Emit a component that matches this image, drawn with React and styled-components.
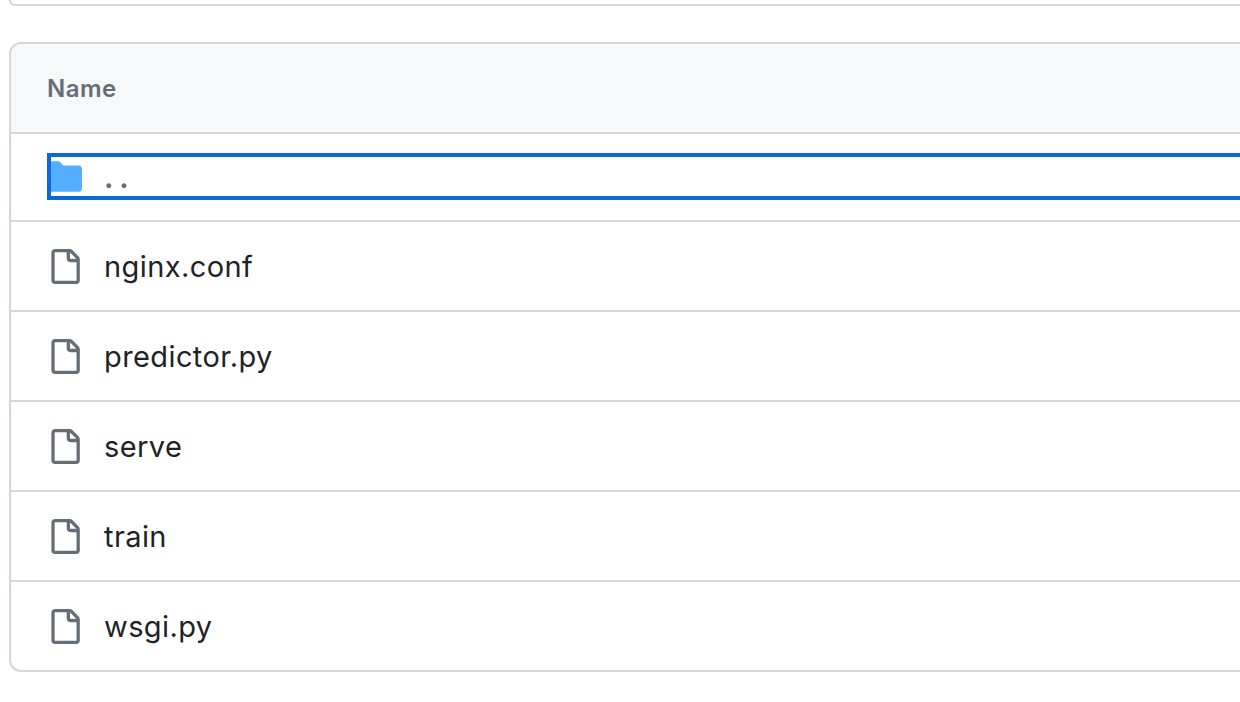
import React from 'react';
import styled, { createGlobalStyle } from 'styled-components';

const GlobalStyle = createGlobalStyle`
  html, body {
    margin: 0;
    padding: 0;
    background: #fff;
    overflow: hidden;
  }
  body {
    font-family: Inter, "Liberation Sans", sans-serif;
  }
`;

const Page = styled.div`
  width: 1240px;
  height: 702px;
  overflow: hidden;
`;

const TopCard = styled.div`
  width: 1260px;
  height: 6px;
  margin: 0 0 36px 9px;
  box-sizing: border-box;
  border: 2px solid #d0d7de;
  border-top: none;
  border-radius: 0 0 12px 12px;
`;

const Table = styled.div`
  width: 1270px;
  margin-left: 9px;
  box-sizing: border-box;
  border: 2px solid #d0d7de;
  border-radius: 12px;
  overflow: hidden;
`;

const Header = styled.div`
  height: 88px;
  display: flex;
  align-items: center;
  padding-left: 36px;
  background: #f6f8fa;
  color: #656d76;
  font-size: 24px;
  font-weight: 600;
  letter-spacing: 0.5px;
`;

const Row = styled.div`
  height: ${(p) => (p.$parent ? '86px' : '88px')};
  display: flex;
  align-items: center;
  padding-left: 36px;
  border-top: 2px solid #d0d7de;
`;

const ParentLink = styled.div`
  height: 47px;
  margin-bottom: 1px;
  flex: 1;
  display: flex;
  align-items: center;
  gap: 22px;
  outline: 4px solid #0969da;
  outline-offset: -4px;
`;

const FileLink = styled.div`
  display: flex;
  align-items: center;
  gap: 22px;
  color: #1f2328;
  font-size: 29px;
  letter-spacing: 0.4px;
  line-height: 40px;
`;

const FileName = styled.span`
  padding-top: 2px;
`;

const Dots = styled.span`
  padding-top: 2px;
  color: #656d76;
  font-size: 28px;
  font-weight: 700;
  letter-spacing: 6px;
  line-height: 40px;
`;

const Icon = styled.svg`
  width: 35px;
  height: 35px;
  flex: none;
  fill: ${(p) => p.$color};
`;

const FolderIcon = () => (
  <Icon viewBox="0 0 16 16" $color="#54aeff">
    <path d="M1.75 1A1.75 1.75 0 0 0 0 2.75v10.5C0 14.216.784 15 1.75 15h12.5A1.75 1.75 0 0 0 16 13.25v-8.5A1.75 1.75 0 0 0 14.25 3H7.5a.25.25 0 0 1-.2-.1l-.9-1.2C6.07 1.26 5.55 1 5 1H1.75Z" />
  </Icon>
);

const FileIcon = () => (
  <Icon viewBox="0 0 16 16" $color="#656d76">
    <path d="M2 1.75C2 .784 2.784 0 3.75 0h6.586c.464 0 .909.184 1.237.513l2.914 2.914c.329.328.513.773.513 1.237v9.586A1.75 1.75 0 0 1 13.25 16h-9.5A1.75 1.75 0 0 1 2 14.25Zm1.75-.25a.25.25 0 0 0-.25.25v12.5c0 .138.112.25.25.25h9.5a.25.25 0 0 0 .25-.25V6h-2.75A1.75 1.75 0 0 1 9 4.25V1.5Zm6.75.062V4.25c0 .138.112.25.25.25h2.688l-.011-.013-2.914-2.914-.013-.011Z" />
  </Icon>
);

const files = ['nginx.conf', 'predictor.py', 'serve', 'train', 'wsgi.py'];

export default function App() {
  return (
    <Page>
      <GlobalStyle />
      <TopCard />
      <Table>
        <Header>Name</Header>
        <Row $parent>
          <ParentLink>
            <FolderIcon />
            <Dots>..</Dots>
          </ParentLink>
        </Row>
        {files.map((name) => (
          <Row key={name}>
            <FileLink>
              <FileIcon />
              <FileName>{name}</FileName>
            </FileLink>
          </Row>
        ))}
      </Table>
    </Page>
  );
}
